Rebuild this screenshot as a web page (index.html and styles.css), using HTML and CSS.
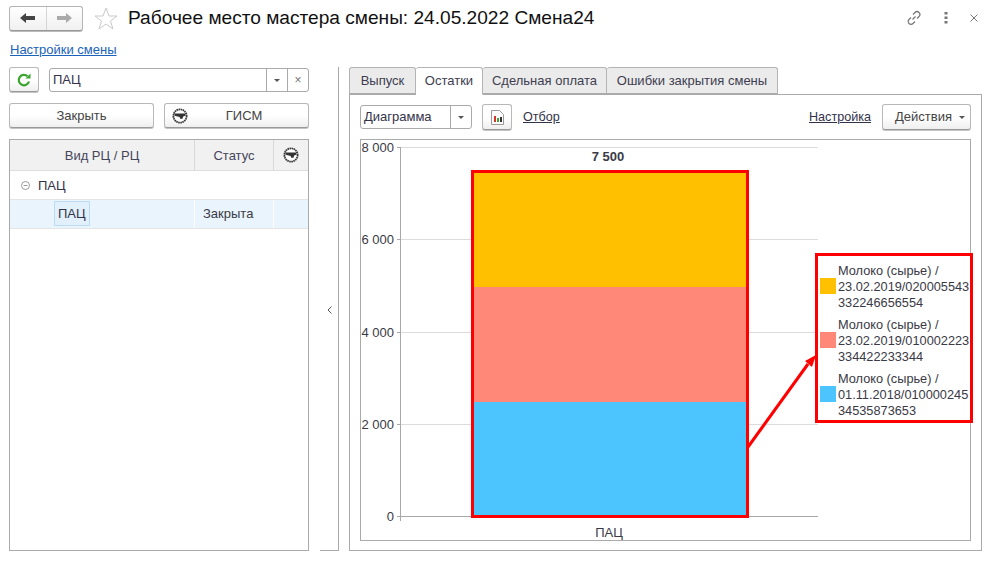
FILE: index.html
```html
<!DOCTYPE html>
<html lang="ru">
<head>
<meta charset="utf-8">
<title>Рабочее место мастера смены</title>
<link rel="stylesheet" href="styles.css">
</head>
<body>
<svg class="defs" width="0" height="0">
  <symbol id="gism" viewBox="0 0 16 16">
    <circle cx="8" cy="8" r="6.6" fill="#fff" stroke="#3a3a3a" stroke-width="1.8" stroke-dasharray="1.6 .5"/>
    <path d="M2.600 5.600h10.800v2.200l-2 .4-1 2.600H8.200l-.6-1.800-5-1.200z" fill="#333"/>
  </symbol>
</svg>
<div class="page">
  <header class="head">
    <div class="nav">
      <button class="nav-btn"><svg width="15" height="10" viewBox="0 0 15 10"><path d="M0 5l6-5v3h9v4H6v3z" fill="#444"/></svg></button>
      <button class="nav-btn"><svg width="15" height="10" viewBox="0 0 15 10"><path d="M15 5L9 0v3H0v4h9v3z" fill="#aaa"/></svg></button>
    </div>
    <svg class="star" width="24" height="23" viewBox="0 0 24 23"><path d="M12 1l3 8h8l-6.500 5 2.500 8-7-5-7 5 2.500-8L1 9h8z" fill="none" stroke="#c9c9c9"/></svg>
    <h1 class="title">Рабочее место мастера смены: 24.05.2022 Смена24</h1>
    <div class="head-tools">
      <svg width="16" height="16" viewBox="0 0 16 16" fill="none" stroke="#777" stroke-width="1.200"><path d="M6.500 9.500l3-3M7 4.500l2-2a2.800 2.800 0 0 1 4 4l-2 2M9 11.500l-2 2a2.800 2.800 0 0 1-4-4l2-2"/></svg>
      <svg width="4" height="12" viewBox="0 0 4 12" fill="#777"><rect x="0.500" y="0" width="3" height="2.500"/><rect x="0.500" y="4.500" width="3" height="2.500"/><rect x="0.500" y="9" width="3" height="2.500"/></svg>
      <svg width="8" height="8" viewBox="0 0 8 8" stroke="#777" fill="none"><path d="M.5.500l7 7M7.500.500l-7 7"/></svg>
    </div>
  </header>
  <a class="settings-link" href="#">Настройки смены</a>
  <main class="workspace">
    <section class="left">
      <div class="filter-row">
        <button class="btn refresh"><svg width="16" height="16" viewBox="0 0 16 16" fill="none"><path d="M13 9.500A5.200 5.200 0 1 1 11.500 4.200" stroke="#3aa52f" stroke-width="2.200"/><path d="M9.500 6.500h5v-5z" fill="#3aa52f"/></svg></button>
        <div class="combo">
          <span class="combo-value">ПАЦ</span>
          <span class="combo-part"><i class="caret"></i></span>
          <span class="combo-part clear">×</span>
        </div>
      </div>
      <div class="actions-row">
        <button class="btn wide">Закрыть</button>
        <button class="btn wide gism-btn"><svg class="gism-icon" width="16" height="16"><use href="#gism"/></svg><span>ГИСМ</span></button>
      </div>
      <div class="table">
        <div class="tr th">
          <div class="c1">Вид РЦ / РЦ</div>
          <div class="c2">Статус</div>
          <div class="c3"><svg width="16" height="16"><use href="#gism"/></svg></div>
        </div>
        <div class="tr group">
          <svg class="minus" width="9" height="9" viewBox="0 0 9 9" fill="none" stroke="#999"><circle cx="4.500" cy="4.500" r="4"/><path d="M2.500 4.500h4"/></svg>
          <span>ПАЦ</span>
        </div>
        <div class="tr selected">
          <div class="c1"><span class="cell-focus">ПАЦ</span></div>
          <div class="c2">Закрыта</div>
          <div class="c3"></div>
        </div>
      </div>
    </section>
    <div class="splitter"><svg width="5" height="8" viewBox="0 0 5 8" fill="none" stroke="#555"><path d="M4.500.500L1 4l3.500 3.500"/></svg></div>
    <section class="right">
      <nav class="tabs">
        <div class="tab t1">Выпуск</div>
        <div class="tab t2 active">Остатки</div>
        <div class="tab t3">Сдельная оплата</div>
        <div class="tab t4">Ошибки закрытия смены</div>
      </nav>
      <div class="tab-body">
        <div class="toolbar">
          <div class="combo small">
            <span class="combo-value">Диаграмма</span>
            <span class="combo-part"><i class="caret"></i></span>
          </div>
          <button class="btn chart-btn"><svg width="13" height="15" viewBox="0 0 13 15"><path d="M.5.500h8l4 4v10H.5z" fill="#fbfbfb" stroke="#9a9a9a"/><rect x="3" y="6" width="2" height="6" fill="#d9342b"/><rect x="6" y="8" width="2" height="4" fill="#3aa52f"/><rect x="9" y="7" width="2" height="5" fill="#333"/></svg></button>
          <a class="tool-link" href="#">Отбор</a>
          <span class="spacer"></span>
          <a class="tool-link" href="#">Настройка</a>
          <button class="btn actions">Действия<i class="caret"></i></button>
        </div>
        <div class="chart">
          <svg class="plot" width="609" height="400" viewBox="0 0 609 400">
            <g class="grid">
              <path d="M39 7.500h418M39 99.500h418M39 192.500h418M39 284.500h418"/>
            </g>
            <g class="axis">
              <path d="M39.500 7v374M36 7.500h3M36 99.500h3M36 192.500h3M36 284.500h3M36 376.500h421"/>
            </g>
            <g class="ticks">
              <text x="33" y="12">8 000</text>
              <text x="33" y="104">6 000</text>
              <text x="33" y="197">4 000</text>
              <text x="33" y="289">2 000</text>
              <text x="33" y="381">0</text>
            </g>
            <text class="total" x="247" y="21">7 500</text>
            <rect x="111" y="31" width="277" height="116" fill="#ffc000"/>
            <rect x="111" y="147" width="277" height="115" fill="#ff8878"/>
            <rect x="111" y="262" width="277" height="115" fill="#4cc5ff"/>
            <rect class="mark" x="111.500" y="31.500" width="275" height="345"/>
            <text class="cat" x="248" y="397">ПАЦ</text>
            <path class="arrow" d="M387 307L447 224"/>
            <path d="M455 215l-11 6 7 6z" fill="#f00"/>
          </svg>
          <ul class="legend">
            <li><i class="swatch s1"></i><span>Молоко (сырье) /<br>23.02.2019/020005543<br>332246656554</span></li>
            <li><i class="swatch s2"></i><span>Молоко (сырье) /<br>23.02.2019/010002223<br>334422233344</span></li>
            <li><i class="swatch s3"></i><span>Молоко (сырье) /<br>01.11.2018/010000245<br>34535873653</span></li>
          </ul>
        </div>
      </div>
    </section>
  </main>
</div>
</body>
</html>
```
FILE: styles.css
```css
* { box-sizing: border-box; }
html, body { margin: 0; height: 100%; background: #fff; }
body { font: 13px "Liberation Sans", Arial, sans-serif; color: #3a3a46; overflow: hidden; }
.defs { position: absolute; }
.page { width: 996px; height: 561px; display: flex; flex-direction: column; padding: 6px 15px 10px 9px; }

.head { display: flex; align-items: center; height: 24px; }
.nav { display: flex; width: 74px; height: 25px; border: 1px solid #b4b4b4; border-bottom-color: #999; border-radius: 3px; background: linear-gradient(#fff, #f0f0f0); box-shadow: 0 1px 0 #bbb; }
.nav-btn { flex: 1; border: 0; background: none; padding: 0; display: flex; align-items: center; justify-content: center; }
.nav-btn + .nav-btn { border-left: 1px solid #d5d5d5; }
.star { margin-left: 11px; }
.title { margin: 0 0 0 10px; font-size: 19.12px; font-weight: 400; color: #111; white-space: nowrap; }
.head-tools { margin-left: auto; width: 72px; margin-right: 3px; display: flex; align-items: center; justify-content: space-between; }

.settings-link { margin: 13px 0 0 1px; height: 14px; line-height: 14px; color: #1a63b8; text-decoration: underline; align-self: flex-start; }

.workspace { display: flex; height: 484px; margin-top: 10px; }
.left { flex: none; width: 300px; display: flex; flex-direction: column; }
.filter-row { display: flex; gap: 10px; height: 25px; }
.btn { font: inherit; color: #444; border: 1px solid #b8b8b8; border-bottom-color: #999; border-radius: 3px; background: linear-gradient(#fff 50%, #efefef); box-shadow: 0 1px 0 #c4c4c4; padding: 0; }
.refresh { width: 30px; height: 25px; display: flex; align-items: center; justify-content: center; }
.combo { flex: 1; display: flex; height: 24px; margin-top: 1px; border: 1px solid #aaa; border-radius: 3px; background: #fff; }
.combo-value { flex: 1; padding-left: 3px; line-height: 22px; color: #33334a; }
.combo-part { width: 21px; border-left: 1px solid #aaa; display: flex; align-items: center; justify-content: center; }
.clear { color: #777; font-size: 12px; }
.caret { display: block; width: 0; height: 0; border: 3px solid transparent; border-top: 3px solid #555; border-bottom: 0; }

.actions-row { display: grid; grid-template-columns: 1fr 1fr; gap: 10px; margin-top: 11px; }
.wide { height: 25px; }
.gism-btn { display: flex; align-items: center; padding-left: 7px; }
.gism-btn span { flex: 1; text-align: center; padding-right: 8px; }
.gism-icon { flex: none; }

.table { height: 413px; margin-top: 11px; border: 1px solid #aaa; }
.tr { display: grid; grid-template-columns: 184px 79px 1fr; }
.th { height: 31px; background: #f1f1f1; border-bottom: 1px solid #ddd; align-items: stretch; text-align: center; color: #45455a; }
.th > div { display: flex; align-items: center; justify-content: center; }
.th .c2, .th .c3 { border-left: 1px solid #d8d8d8; }
.group { display: flex; align-items: center; height: 29px; padding-left: 11px; gap: 8px; color: #33334a; border-bottom: 1px solid #e4e4e4; }
.selected { height: 29px; background: #eaf4fc; border-bottom: 1px solid #e4e4e4; align-items: stretch; }
.selected .c1 { padding: 1px 0 0 44px; }
.cell-focus { display: inline-block; height: 25px; padding: 0 3px; line-height: 23px; background: #e1f0fb; border: 1px solid #bcdcf5; color: #33334a; }
.selected .c2 { border-left: 1px solid #fff; padding-left: 8px; line-height: 27px; }
.selected .c3 { border-left: 1px solid #fff; }

.splitter { flex: none; width: 19px; margin: 0 10px 0 11px; height: 484px; border-right: 1px solid #aaa; border-bottom: 1px solid #aaa; display: flex; align-items: center; justify-content: center; padding-top: 3px; }

.right { flex: 1; display: flex; flex-direction: column; }
.tabs { display: flex; height: 27px; position: relative; z-index: 1; }
.tab { height: 27px; border: 1px solid #b4b4b4; border-bottom: 1px solid #aaa; border-left: 0; border-radius: 3px 3px 0 0; background: #ebebeb; text-align: center; line-height: 26px; color: #3e3e50; }
.t1 { width: 67px; border-left: 1px solid #b4b4b4; }
.t2 { width: 67px; }
.t3 { width: 124px; }
.t4 { width: 171px; }
.active { background: #fff; border-bottom-color: #fff; height: 28px; }
.tab-body { height: 457px; border: 1px solid #aaa; padding: 9px 10px; display: flex; flex-direction: column; }
.toolbar { display: flex; align-items: center; height: 26px; }
.small { flex: none; width: 112px; margin-top: 0; }
.chart-btn { width: 30px; height: 26px; margin-left: 10px; display: flex; align-items: center; justify-content: center; }
.tool-link { margin-left: 11px; color: #33334a; text-decoration: underline; font-size: 12.6px; }
.spacer { flex: 1; }
.actions { width: 89px; height: 26px; margin-left: 11px; display: flex; align-items: center; justify-content: center; gap: 7px; padding: 0 0 2px 7px; }
.actions .caret { margin-top: 2px; }

.chart { position: relative; height: 402px; margin-top: 9px; border: 1px solid #aaa; }
.plot { display: block; }
.plot text { font: 13px "Liberation Sans", Arial, sans-serif; fill: #3a3a46; }
.grid path { stroke: #dcdcdc; fill: none; }
.axis path { stroke: #a8a8a8; fill: none; }
.ticks text { text-anchor: end; }
.plot .total { font-weight: 700; text-anchor: middle; }
.plot .cat { text-anchor: middle; }
.mark { fill: none; stroke: #f00; stroke-width: 3; }
.arrow { stroke: #f00; stroke-width: 3; fill: none; }
.legend { position: absolute; left: 454px; top: 113px; width: 158px; height: 170px; margin: 0; padding: 4px 0 0 2px; list-style: none; border: 3px solid #f00; background: #fff; font-size: 12.75px; line-height: 16px; color: #3a3a46; }
.legend li { display: flex; align-items: center; gap: 2px; height: 54px; white-space: nowrap; }
.swatch { width: 16px; height: 16px; flex: none; margin-top: -2px; }
.s1 { background: #ffc000; }
.s2 { background: #ff8878; }
.s3 { background: #4cc5ff; }
```
